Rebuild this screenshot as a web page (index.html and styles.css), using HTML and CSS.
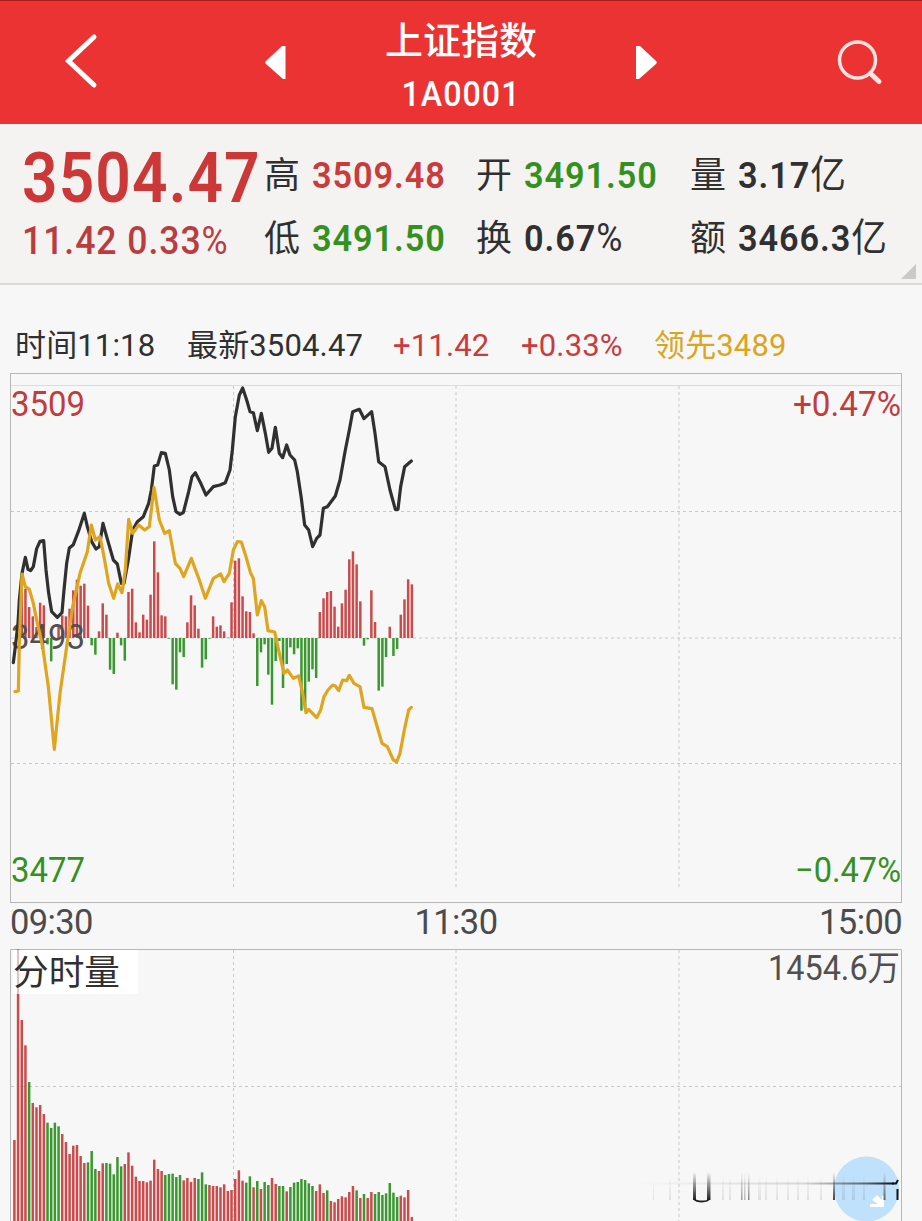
FILE: index.html
```html
<!DOCTYPE html>
<html lang="zh-CN">
<head>
<meta charset="utf-8">
<title>上证指数 1A0001</title>
<link rel="stylesheet" href="styles.css">
</head>
<body>
<header class="topbar">
  <svg class="icon-back" viewBox="0 0 40 60"><path d="M32 6 6.500 30 32 54" fill="none" stroke="#fff" stroke-width="5" stroke-linecap="round" stroke-linejoin="miter"/></svg>
  <svg class="icon-prev" viewBox="0 0 21 34"><path d="M20.500 1V34H18L1 19Q-.5 17.500 1 16L17 1Z" fill="#fff"/></svg>
  <div class="title"><h1>上证指数</h1><p>1A0001</p></div>
  <svg class="icon-next" viewBox="0 0 21 34"><path d="M0 1V34H3L20 19Q21.500 17.500 20 16L4 1Z" fill="#fff"/></svg>
  <svg class="icon-search" viewBox="0 0 48 48"><circle cx="21.500" cy="21" r="18" fill="none" stroke="#ffe3e0" stroke-width="3.500"/><path d="M34.500 34.500 43 42.500" stroke="#ffe3e0" stroke-width="5" stroke-linecap="round"/></svg>
</header>

<section class="quote">
  <div class="last">
    <div class="price">3504.47</div>
    <div class="change">11.42 0.33<i>%</i></div>
  </div>
  <dl class="stats">
    <div><dt>高</dt><dd class="up">3509.48</dd></div>
    <div><dt>开</dt><dd class="down">3491.50</dd></div>
    <div><dt>量</dt><dd>3.17<i>亿</i></dd></div>
    <div><dt>低</dt><dd class="down">3491.50</dd></div>
    <div><dt>换</dt><dd>0.67<i>%</i></dd></div>
    <div><dt>额</dt><dd>3466.3<i>亿</i></dd></div>
  </dl>
  <span class="corner"></span>
</section>

<div class="ticker">
  <span>时间11:18</span><span>最新3504.47</span><span class="up">+11.42</span><span class="up">+0.33%</span><span class="lead">领先3489</span>
</div>

<main>
  <svg class="chart" id="price" viewBox="0 0 892 531">
    <rect class="frame" x=".5" y="1.5" width="891" height="529"/>
    <path class="grid-solid" d="M1 13.500H891"/>
    <path class="grid" d="M1 139.500H891M1 266H891M1 391.500H891M223.500 14V517M446 14V517M669 14V517"/>
    <g id="flow"></g>
    <text class="lbl up" x="1" y="44" textLength="74" lengthAdjust="spacingAndGlyphs">3509</text>
    <text class="lbl mid" x="1" y="277" textLength="74" lengthAdjust="spacingAndGlyphs">3493</text>
    <text class="lbl down" x="1" y="510" textLength="74" lengthAdjust="spacingAndGlyphs">3477</text>
    <text class="lbl up" x="783" y="44" textLength="108" lengthAdjust="spacingAndGlyphs">+0.47%</text>
    <text class="lbl down" x="785" y="510" textLength="106" lengthAdjust="spacingAndGlyphs">−0.47%</text>
    <g transform="translate(-10 -2) scale(.33333)">
      <polyline class="line index" points="40,878 46,830 54,760 58,690 66,610 76,562 84,598 92,602 100,590 110,536 120,514 131,512 138,600 146,670 155,725 172,742 186,728 192,660 200,580 208,534 220,524 236,482 253,430 262,470 275,515 288,537 298,530 309,460 320,500 340,570 352,582 364,640 372,640 385,570 398,480 412,455 430,440 446,400 454,360 463,288 473,285 484,248 496,250 508,300 518,380 528,425 540,433 550,428 566,365 576,320 586,308 600,335 618,375 640,350 660,345 676,338 690,300 697,240 706,140 718,75 728,54 740,90 750,125 760,128 772,182 784,130 796,190 806,247 816,235 826,172 838,250 848,263 860,225 870,255 884,270 892,305 904,385 914,465 926,480 938,530 950,505 960,495 970,415 982,410 1006,378 1020,330 1036,240 1048,180 1058,125 1078,118 1092,146 1115,125 1125,190 1136,275 1155,290 1170,360 1186,418 1194,418 1202,350 1214,290 1234,273"/>
      <polyline class="line leader" points="45,965 55,963 58,820 66,612 76,650 88,658 100,700 112,760 128,830 145,950 163,1138 180,970 200,830 218,710 240,610 262,545 274,465 286,510 300,500 312,560 326,640 341,685 353,642 366,668 376,600 386,448 398,490 416,465 434,480 448,470 462,352 478,450 494,490 508,482 526,580 540,595 551,620 574,565 586,598 598,630 616,685 640,625 662,612 672,635 688,610 700,540 712,515 724,516 738,560 752,610 760,625 772,735 784,692 794,710 804,782 824,786 838,850 852,910 862,900 880,925 896,918 908,970 918,1028 926,1018 950,1043 962,1020 972,980 984,960 998,945 1006,948 1016,962 1028,930 1040,932 1048,916 1062,940 1080,950 1092,1012 1116,1016 1130,1065 1146,1120 1162,1130 1180,1170 1190,1176 1200,1150 1214,1075 1226,1020 1234,1012"/>
    </g>
  </svg>
  <div class="times"><span>09:30</span><span>11:30</span><span>15:00</span></div>
  <div class="volume">
    <svg class="chart" id="vol" viewBox="0 0 892 272">
      <path class="frame" d="M.5 272V.5H891.500V272"/>
      <path class="grid" d="M1 137.500H891M223.500 1V272M446 1V272M669 1V272"/>
      <g id="volbars"></g>
      <rect x="3" y="1" width="125" height="44" fill="#fff"/>
      <rect x="7" y="1" width="2" height="44" fill="#dcc4c4"/>
      <text class="vname" x="3" y="36" textLength="107" lengthAdjust="spacingAndGlyphs">分时量</text>
      <text class="lbl mid" x="758" y="31" textLength="132" lengthAdjust="spacingAndGlyphs">1454.6万</text>
    </svg>
    <svg class="float" viewBox="0 0 302 81">
      <defs>
        <linearGradient id="fadeX"><stop offset="0" stop-color="#222" stop-opacity="0"/><stop offset=".65" stop-color="#222" stop-opacity=".15"/><stop offset=".88" stop-color="#222" stop-opacity=".6"/><stop offset="1" stop-color="#111"/></linearGradient>
        <linearGradient id="fadeY" x2="0" y2="1"><stop offset="0" stop-color="#222" stop-opacity="0"/><stop offset="1" stop-color="#222"/></linearGradient>
      </defs>
      <circle cx="246.500" cy="49" r="32.500" fill="#bfe1fb"/>
      <path d="M257 55 262 60V56H264V67H250V64H258L252 60Z" fill="#fff"/>
      <rect x="14" y="42.500" width="260" height="2" fill="url(#fadeX)"/>
      <g fill="url(#fadeY)">
        <rect x="73" y="32" width="3" height="28"/><rect x="87" y="32" width="3.500" height="28"/>
        <rect x="121" y="32" width="1.500" height="28" opacity=".45"/><rect x="124" y="32" width="1.500" height="28" opacity=".3"/><rect x="128" y="32" width="1.500" height="28" opacity=".55"/>
        <rect x="213" y="32" width="2" height="28" opacity=".85"/><rect x="263.500" y="32" width="2" height="28" opacity=".65"/>
        <g opacity=".1"><rect x="33" y="40" width="1" height="20"/><rect x="49" y="38" width="2" height="22"/><rect x="102" y="36" width="2" height="24"/><rect x="109" y="36" width="2" height="24"/><rect x="138" y="36" width="3" height="24"/><rect x="145" y="36" width="2" height="24"/><rect x="156" y="36" width="2" height="24"/><rect x="167" y="36" width="2" height="24"/><rect x="177" y="36" width="2" height="24"/><rect x="187" y="36" width="2" height="24"/><rect x="200" y="36" width="2" height="24"/><rect x="222" y="34" width="3" height="26"/><rect x="232" y="34" width="3" height="26"/><rect x="243" y="34" width="2" height="26"/></g>
      </g>
      <path d="M74 59Q76 61.500 82 61.500T89 59" fill="none" stroke="#222" stroke-width="1.800"/>
      <path d="M272 43.500H276L278 40M277.500 49V60" fill="none" stroke="#111" stroke-width="2"/>
    </svg>
  </div>
</main>
<script src="chart.js"></script>
</body>
</html>
```
FILE: styles.css
```css
* { box-sizing: border-box; margin: 0; padding: 0; }
html, body { height: 1221px; overflow: hidden; }
body { background: #f7f7f7; color: #303030; font-family: Roboto, "Noto Sans CJK SC", sans-serif; }
i { font-style: normal; font-weight: 400; }
svg { display: block; }
.up { color: #c93b3c; fill: #c23c3c; }
.down { color: #35911f; fill: #35911f; }

.topbar { height: 124px; background: #eb3334; border-top: 1px solid #a81c1c; color: #fff; display: grid; grid-template-columns: 265px 21px 350px 21px 179px 48px; align-items: start; }
.icon-back { width: 40px; height: 60px; margin: 30px 0 0 62px; }
.icon-prev, .icon-next { width: 21px; height: 34px; margin-top: 44px; }
.icon-search { grid-column: 6; width: 48px; height: 48px; margin-top: 38px; }
.title { text-align: center; padding-top: 13px; }
.title h1 { font-size: 38px; line-height: 54px; font-weight: 500; }
.title p { font-size: 35px; line-height: 50px; letter-spacing: 1.100px; font-weight: 500; padding-top: 2px; transform: scaleX(.92); }

.quote { position: relative; height: 161px; background: #f4f3f1; border-bottom: 2px solid #d9d9d7; display: flex; padding-left: 22px; }
.last { width: 242px; color: #cc3738; padding-top: 14px; white-space: nowrap; }
.price { font-size: 70px; line-height: 80px; font-weight: 600; letter-spacing: 1.200px; transform: scaleX(.89); transform-origin: left; }
.change { font-size: 38.500px; line-height: 46px; font-weight: 500; letter-spacing: 1px; color: #b93d40; transform: scaleX(.925); transform-origin: left; }
.stats { display: grid; grid-template-columns: 212px 214px 210px; grid-template-rows: 63px 63px; padding-top: 20px; white-space: nowrap; }
.stats div { display: flex; gap: 12px; line-height: 63px; font-size: 36px; }
.stats dt { width: 36px; padding-top: 1px; }
.stats dd { font-size: 37.500px; font-weight: 600; letter-spacing: 1px; transform: scaleX(.915); transform-origin: left; }
.stats dd i { font-size: 39px; line-height: 1; }
.corner { position: absolute; right: 6px; bottom: 4px; border-left: 15px solid transparent; border-bottom: 15px solid #c9c9c9; }

.ticker { height: 87px; padding: 39px 0 0 15px; display: grid; grid-template-columns: 172px 206px 128px 133px 1fr; font-size: 31px; line-height: 44px; letter-spacing: .15px; white-space: nowrap; }
.lead { color: #dba520; }

.chart { width: 892px; margin-left: 10px; }
#price { height: 531px; }
#vol { height: 272px; }
.frame { fill: none; stroke: #b7b7b7; }
.grid { fill: none; stroke: #c8c8c8; stroke-dasharray: 3 3; }
.grid-solid { stroke: #dcdcdc; }
.lbl { font-size: 34.500px; }
.mid { fill: #505050; }
.line { fill: none; stroke-width: 9.600; stroke-linejoin: round; stroke-linecap: round; }
.index { stroke: #303030; }
.leader { stroke: #dfa51f; }
.bar-up { fill: #c94b4c; }
.bar-down { fill: #3b9730; }
.times { height: 48px; padding: 0 20px 0 10px; margin-top: -2px; display: flex; justify-content: space-between; font-size: 34.500px; line-height: 43px; color: #4b4b4b; letter-spacing: -.6px; }
.volume { position: relative; height: 272px; }
.vname { font-size: 35px; fill: #303030; }
.float { position: absolute; left: 620px; bottom: 0; width: 302px; height: 81px; }
```
FILE: chart.js
```js
// One bar per minute; bar geometry is in thirds of a pixel.
const PITCH = 11.04 / 3, FIRST = 14.4 - 10, WIDTH = 2.5;

// Signed strength: positive above the baseline, negative below.
const flow = [0,0,178,148,93,65,33,106,98,-19,-70,0,33,68,65,88,143,175,157,163,97,-22,-50,20,104,70,-95,-108,16,-22,-68,
  138,148,47,17,70,55,130,290,197,68,65,-2,-139,-155,-43,-57,47,128,98,28,-89,-64,-2,65,34,38,20,1,107,232,239,125,80,78,14,
  -144,-43,-19,-110,-200,-69,-9,-150,-78,-28,-49,-31,-218,-212,-131,-94,-120,78,119,138,141,94,34,104,145,236,260,221,110,
  -23,-4,143,48,-158,-146,-57,34,-54,-33,70,116,176,161];

// Distance from the top of the panel; negative values are falling minutes.
const volume = [600,28,240,316,-426,489,502,495,522,-548,-564,-548,-559,582,606,642,617,615,648,669,-667,-633,-687,693,670,
  -669,-671,-703,-651,-679,672,637,677,710,723,723,727,722,659,687,693,-705,-702,-701,-711,-705,721,714,726,714,-717,-697,-733,
  735,738,738,742,733,753,750,717,691,722,-728,-709,742,-723,747,-726,-735,714,732,-738,-738,754,-741,-728,-726,-717,-720,-730,
  -738,753,733,759,-751,783,787,777,769,772,756,738,-751,774,-762,774,756,-762,-756,-765,-760,-729,-758,-771,767,772,750,831];

function bar(parent, i, top, height, cls) {
  const r = document.createElementNS("http://www.w3.org/2000/svg", "rect");
  r.setAttribute("x", FIRST + i * PITCH - WIDTH / 2);
  r.setAttribute("y", top);
  r.setAttribute("width", WIDTH);
  r.setAttribute("height", height);
  r.setAttribute("class", cls);
  parent.appendChild(r);
}

const flowGroup = document.getElementById("flow");
flow.forEach((v, i) => {
  const h = Math.abs(v) / 3;
  bar(flowGroup, i, v > 0 ? 266 - h : 266, h, v > 0 ? "bar-up" : "bar-down");
});

const volGroup = document.getElementById("volbars");
volume.forEach((v, i) => {
  const top = Math.abs(v) / 3 - 9;
  bar(volGroup, i, top, 272 - top, v > 0 ? "bar-up" : "bar-down");
});
```
